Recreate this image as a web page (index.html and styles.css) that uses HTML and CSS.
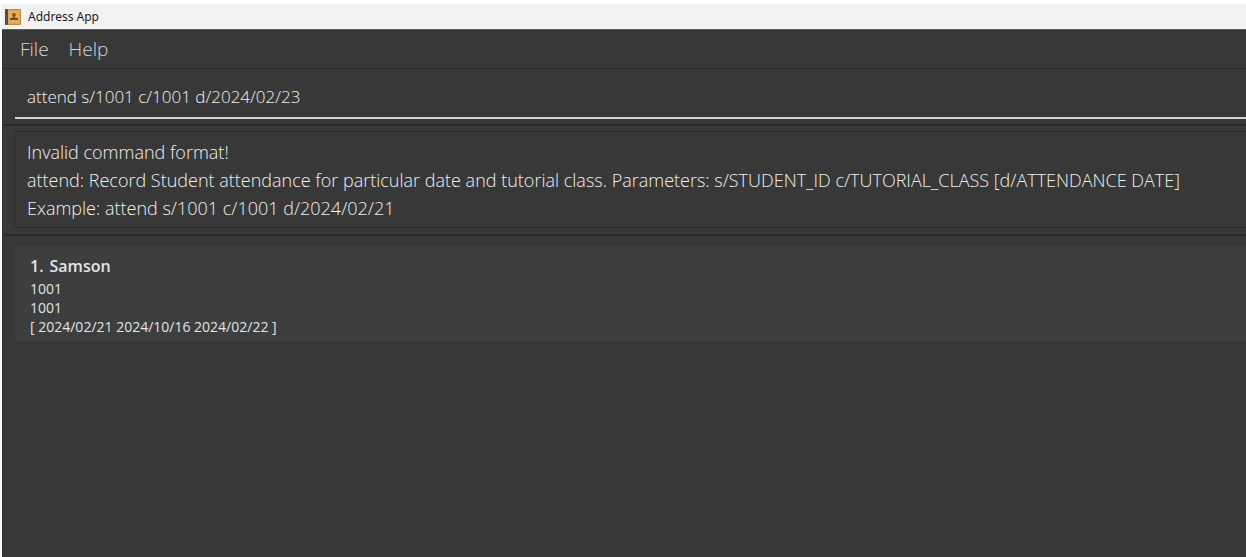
FILE: index.html
```html
<!DOCTYPE html>
<html lang="en">
<head>
<meta charset="utf-8">
<title>Address App</title>
<link rel="stylesheet" href="styles.css">
</head>
<body>
<div class="window">
  <header class="title-bar">
    <svg class="app-icon" viewBox="0 0 16 16" aria-hidden="true">
      <rect x="0" y="0" width="16" height="16" rx="1" fill="#b98a4c"/>
      <rect x="0" y="0" width="3" height="16" rx="1" fill="#5d4a3e"/>
      <rect x="3" y="1" width="12" height="13" fill="#e3ab5a"/>
      <path d="M3 14h12v1H3z" fill="#c9a678"/>
      <path d="M9 4a1.700 1.700 0 0 1 1.700 1.700c0 .9-.5 1.500-.9 1.800v1l3.200.8V11H5V9.300l3.200-.8v-1c-.4-.3-.9-.9-.9-1.800A1.700 1.700 0 0 1 9 4z" fill="#6b4e30"/>
    </svg>
    <span class="app-title">Address App</span>
  </header>
  <nav class="menu-bar">
    <button class="menu-item" type="button">File</button>
    <button class="menu-item" type="button">Help</button>
  </nav>
  <section class="command-pane">
    <input class="command-input" type="text" aria-label="Command" spellcheck="false" value="attend s/1001 c/1001 d/2024/02/23">
  </section>
  <section class="result-pane">
    <textarea class="result-text" rows="3" readonly aria-label="Result" spellcheck="false">Invalid command format!
attend: Record Student attendance for particular date and tutorial class. Parameters: s/STUDENT_ID c/TUTORIAL_CLASS [d/ATTENDANCE DATE]
Example: attend s/1001 c/1001 d/2024/02/21</textarea>
  </section>
  <main class="list-pane">
    <article class="person-card">
      <h2 class="person-name"><span>1.</span><span>Samson</span></h2>
      <p class="person-detail">1001</p>
      <p class="person-detail">1001</p>
      <p class="person-detail">[ 2024/02/21 2024/10/16 2024/02/22 ]</p>
    </article>
  </main>
</div>
</body>
</html>
```
FILE: styles.css
```css
* { box-sizing: border-box; }
body {
  margin: 0;
  background: #fff;
  font-family: "Open Sans", "Noto Sans", sans-serif;
}
.window {
  display: flex;
  flex-direction: column;
  min-height: 100vh;
  padding: 4px 0 0 2px;
}
.title-bar {
  display: flex;
  align-items: center;
  gap: 7px;
  height: 25px;
  padding-left: 3px;
  background: #f2f2f2;
}
.app-icon { width: 16px; height: 16px; }
.app-title { font-family: "Noto Sans", sans-serif; font-size: 12px; color: #1a1a1a; }
.menu-bar {
  display: flex;
  gap: 20px;
  height: 40px;
  padding: 0 18px;
  background: #383838;
  border-top: 1px solid #5c605c;
  border-bottom: 1px solid #2b2b2b;
}
.menu-item {
  padding: 0;
  border: 0;
  background: none;
  font: 300 19px/36px "Open Sans", sans-serif;
  color: #d4d4d4;
}
.command-pane {
  padding: 6px 0 5px 13px;
  background: #383838;
  border-bottom: 2px solid #2b2b2b;
}
.command-input {
  display: block;
  width: 100%;
  height: 44px;
  padding: 0 12px;
  border: 0;
  border-bottom: 2px solid #d4d4d4;
  outline: 0;
  background: transparent;
  font: 300 17px/24px "Open Sans", sans-serif;
  color: #f0f0f0;
}
.result-pane {
  padding: 5px 0 6px 12px;
  background: #383838;
  border-bottom: 2px solid #2b2b2b;
}
.result-text {
  display: block;
  width: 100%;
  height: 97px;
  padding: 6px 12px;
  border: 1px solid #2c2c2c;
  border-right: 0;
  outline: 0;
  resize: none;
  overflow: hidden;
  background: transparent;
  font: 300 18px/28px "Open Sans", sans-serif;
  color: #f0f0f0;
}
.list-pane {
  flex: 1;
  padding: 11px 0 0 12px;
  background: #383838;
  border-left: 1px solid #303030;
}
.person-card {
  padding: 7px 15px 5px;
  background: #3c3e3f;
  color: #e4e4e4;
}
.person-name {
  display: flex;
  gap: 6px;
  margin: 0;
  font-size: 16px;
  font-weight: 600;
  line-height: 25px;
}
.person-detail {
  margin: 0;
  font-size: 14px;
  line-height: 19px;
}
```
